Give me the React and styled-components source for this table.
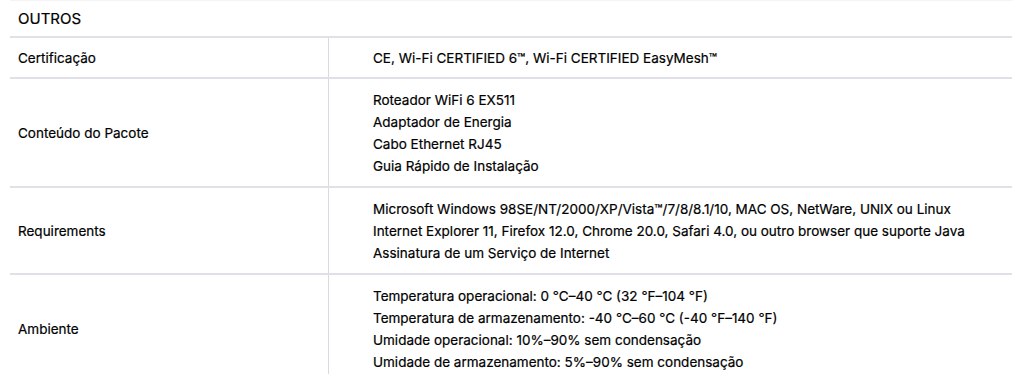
import styled, { createGlobalStyle } from "styled-components";

const Global = createGlobalStyle`
  body {
    margin: 0;
    background: #fff;
    font-family: Inter, "Noto Sans", sans-serif;
    color: #000;
    -webkit-text-stroke: 0.2px #000;
  }
`;

const Wrap = styled.div`
  padding: 0 11px 0 10px;
`;

const Heading = styled.div`
  height: 35px;
  display: flex;
  align-items: center;
  padding-left: 8px;
  font-size: 15px;
  border-top: 1px solid #f4f4f7;
  border-bottom: 2px solid #dfe0e8;
`;

const Row = styled.div`
  display: grid;
  grid-template-columns: 319px 1fr;
  border-bottom: 2px solid #dfe0e8;
`;

const Label = styled.div`
  display: flex;
  align-items: center;
  padding-left: 8px;
  font-size: 13.5px;
  border-right: 1px solid #d8dae3;
`;

const Value = styled.div`
  padding: ${(p) => (p.$single ? "9px 0 8px 44px" : "10px 0 9px 44px")};
  font-size: 13.5px;
  line-height: 22px;
`;

const Line = styled.div``;

const rows = [
  { label: "Certificação", lines: ["CE, Wi-Fi CERTIFIED 6™, Wi-Fi CERTIFIED EasyMesh™"] },
  {
    label: "Conteúdo do Pacote",
    lines: ["Roteador WiFi 6 EX511", "Adaptador de Energia", "Cabo Ethernet RJ45", "Guia Rápido de Instalação"],
  },
  {
    label: "Requirements",
    lines: [
      "Microsoft Windows 98SE/NT/2000/XP/Vista™/7/8/8.1/10, MAC OS, NetWare, UNIX ou Linux",
      "Internet Explorer 11, Firefox 12.0, Chrome 20.0, Safari 4.0, ou outro browser que suporte Java",
      "Assinatura de um Serviço de Internet",
    ],
  },
  {
    label: "Ambiente",
    lines: [
      "Temperatura operacional: 0 °C–40 °C (32 °F–104 °F)",
      "Temperatura de armazenamento: -40 °C–60 °C (-40 °F–140 °F)",
      "Umidade operacional: 10%–90% sem condensação",
      "Umidade de armazenamento: 5%–90% sem condensação",
    ],
  },
];

export default function App() {
  return (
    <>
      <Global />
      <Wrap>
        <Heading>OUTROS</Heading>
        {rows.map((r) => (
          <Row key={r.label}>
            <Label>{r.label}</Label>
            <Value $single={r.lines.length === 1}>
              {r.lines.map((l) => (
                <Line key={l}>{l}</Line>
              ))}
            </Value>
          </Row>
        ))}
      </Wrap>
    </>
  );
}
